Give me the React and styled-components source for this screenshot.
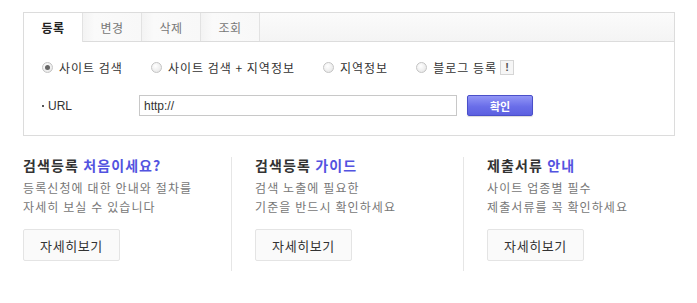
import styled, { createGlobalStyle } from "styled-components";
import { useState } from "react";

const GlobalStyle = createGlobalStyle`
  body {
    margin: 0;
    background: #fff;
    font-family: "Noto Sans CJK KR", "Liberation Sans", sans-serif;
    color: #333;
  }
`;

const tabs = ["등록", "변경", "삭제", "조회"];

const options = [
  "사이트 검색",
  "사이트 검색 + 지역정보",
  "지역정보",
  "블로그 등록",
];

const guides = [
  {
    title: "검색등록",
    accent: "처음이세요?",
    lines: ["등록신청에 대한 안내와 절차를", "자세히 보실 수 있습니다"],
  },
  {
    title: "검색등록",
    accent: "가이드",
    lines: ["검색 노출에 필요한", "기준을 반드시 확인하세요"],
  },
  {
    title: "제출서류",
    accent: "안내",
    lines: ["사이트 업종별 필수", "제출서류를 꼭 확인하세요"],
  },
];

export default function App() {
  const [activeTab, setActiveTab] = useState(0);
  const [option, setOption] = useState(0);

  return (
    <>
      <GlobalStyle />
      <Page>
        <Panel>
          <TabBar>
            {tabs.map((tab, index) => (
              <Tab
                key={tab}
                $active={index === activeTab}
                onClick={() => setActiveTab(index)}
              >
                {tab}
              </Tab>
            ))}
          </TabBar>

          <PanelBody>
            <RadioRow>
              {options.map((label, index) => (
                <RadioLabel key={label} onClick={() => setOption(index)}>
                  <RadioDot $checked={index === option} />
                  {label}
                  {index === options.length - 1 && <InfoBadge>!</InfoBadge>}
                </RadioLabel>
              ))}
            </RadioRow>

            <UrlRow>
              <UrlLabel>
                <Bullet />
                URL
              </UrlLabel>
              <UrlInput defaultValue="http://" />
              <ConfirmButton>확인</ConfirmButton>
            </UrlRow>
          </PanelBody>
        </Panel>

        <Guides>
          {guides.map((guide, index) => (
            <GuideColumn key={guide.accent} $first={index === 0}>
              <GuideTitle>
                {guide.title} <GuideAccent>{guide.accent}</GuideAccent>
              </GuideTitle>
              <GuideText>
                {guide.lines.map((line) => (
                  <div key={line}>{line}</div>
                ))}
              </GuideText>
              <MoreButton>자세히보기</MoreButton>
            </GuideColumn>
          ))}
        </Guides>
      </Page>
    </>
  );
}

const Page = styled.div`
  width: 697px;
  padding: 12px 0 0 23px;
  box-sizing: border-box;
`;

const Panel = styled.div`
  width: 652px;
  height: 124px;
  box-sizing: border-box;
  border: 1px solid #dcdcdc;
`;

const TabBar = styled.div`
  display: flex;
  height: 28px;
  background: linear-gradient(to bottom, #fbfbfb, #f4f4f4);
  border-bottom: 1px solid #dcdcdc;
`;

const Tab = styled.div`
  width: 59px;
  display: flex;
  align-items: center;
  justify-content: center;
  font-size: 12px;
  letter-spacing: 0.5px;
  cursor: pointer;
  border-right: 1px solid #e2e2e2;
  box-sizing: border-box;
  color: ${(p) => (p.$active ? "#222" : "#777")};
  font-weight: ${(p) => (p.$active ? 700 : 400)};
  background: ${(p) =>
    p.$active
      ? "#fff"
      : "linear-gradient(to right, #f3f3f3, #fafafa 20%, #f8f8f8)"};
  height: ${(p) => (p.$active ? "29px" : "28px")};
`;

const PanelBody = styled.div`
  padding: 17px 0 0 18px;
`;

const RadioRow = styled.div`
  display: flex;
  align-items: center;
  gap: 28px;
  height: 16px;
`;

const RadioLabel = styled.label`
  display: flex;
  align-items: center;
  font-size: 12px;
  letter-spacing: 1px;
  color: #333;
  cursor: pointer;
  white-space: nowrap;
`;

const RadioDot = styled.span`
  width: 11px;
  height: 11px;
  margin-right: 6px;
  border-radius: 50%;
  border: 1px solid #c4c4c4;
  box-sizing: border-box;
  background: radial-gradient(circle at 40% 35%, #ffffff, #e2e2e2);
  position: relative;

  &::after {
    content: "";
    display: ${(p) => (p.$checked ? "block" : "none")};
    position: absolute;
    left: 2px;
    top: 2px;
    width: 5px;
    height: 5px;
    border-radius: 50%;
    background: #666;
  }
`;

const InfoBadge = styled.span`
  width: 14px;
  height: 15px;
  margin-left: 3px;
  border: 1px solid #d5d5d5;
  background: #f6f6f6;
  box-sizing: border-box;
  display: inline-flex;
  align-items: center;
  justify-content: center;
  font-family: "Liberation Sans", sans-serif;
  font-size: 11px;
  font-weight: 700;
  letter-spacing: 0;
  color: #555;
`;

const UrlRow = styled.div`
  display: flex;
  align-items: center;
  margin-top: 20px;
`;

const UrlLabel = styled.div`
  width: 97px;
  display: flex;
  align-items: center;
  gap: 4px;
  font-family: "Liberation Sans", sans-serif;
  font-size: 12px;
  color: #333;
`;

const Bullet = styled.span`
  width: 2px;
  height: 2px;
  background: #555;
`;

const UrlInput = styled.input`
  width: 318px;
  height: 21px;
  box-sizing: border-box;
  border: 1px solid #c8c8c8;
  padding: 0 4px;
  font-family: "Liberation Sans", sans-serif;
  font-size: 12px;
  color: #333;
  outline: none;
`;

const ConfirmButton = styled.button`
  width: 66px;
  height: 21px;
  margin-left: 10px;
  border: 1px solid #4a4fc9;
  border-radius: 2px;
  background: linear-gradient(to bottom, #9296f6, #6a6ee9 55%, #5c60e0);
  color: #fff;
  font-family: "Noto Sans CJK KR", sans-serif;
  font-size: 11px;
  font-weight: 700;
  padding: 0;
  box-shadow: 0 1px 1px rgba(0, 0, 0, 0.15);
  cursor: pointer;
`;

const Guides = styled.div`
  display: grid;
  grid-template-columns: 208px 232px 1fr;
  margin-top: 21px;
`;

const GuideColumn = styled.div`
  height: 114px;
  border-left: ${(p) => (p.$first ? "none" : "1px solid #e6e6e6")};
  padding-left: ${(p) => (p.$first ? "0" : "23px")};
`;

const GuideTitle = styled.div`
  font-size: 14px;
  font-weight: 700;
  letter-spacing: 1.1px;
  color: #333;
  line-height: 16px;
`;

const GuideAccent = styled.span`
  color: #5353e0;
`;

const GuideText = styled.div`
  margin-top: 5px;
  font-size: 12px;
  letter-spacing: 1.1px;
  line-height: 19px;
  color: #777;
`;

const MoreButton = styled.button`
  display: block;
  margin-top: 13px;
  width: 97px;
  height: 32px;
  box-sizing: border-box;
  border: 1px solid #e4e4e4;
  border-radius: 2px;
  background: #fafafa;
  color: #333;
  font-family: "Noto Sans CJK KR", sans-serif;
  font-size: 13px;
  letter-spacing: 0.6px;
  padding: 0;
  cursor: pointer;
`;
